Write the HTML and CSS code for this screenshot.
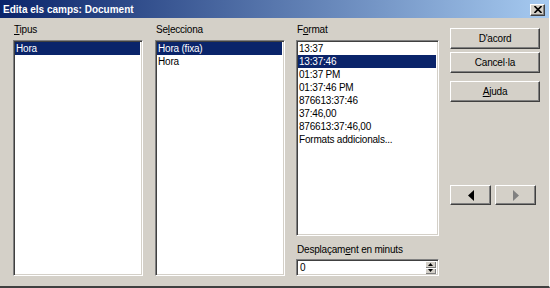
FILE: index.html
```html
<!DOCTYPE html>
<html>
<head>
<title>Edita els camps: Document</title>
<link rel="stylesheet" href="styles.css">
</head>
<body>
<div class="dialog">
  <div class="titlebar">
    <span class="title">Edita els camps: Document</span>
    <span class="close"><svg width="8" height="7" viewBox="0 0 8 7"><path d="M0.5 0 L7.5 7 M7.5 0 L0.5 7" stroke="#000" stroke-width="1.6"/></svg></span>
  </div>
  <div class="content">
    <div class="col col-tipus">
      <div class="label"><u>T</u>ipus</div>
      <div class="list tall">
        <div class="item sel">Hora</div>
      </div>
    </div>
    <div class="col col-sel">
      <div class="label">Se<u>l</u>ecciona</div>
      <div class="list tall">
        <div class="item sel">Hora (fixa)</div>
        <div class="item">Hora</div>
      </div>
    </div>
    <div class="col col-format">
      <div class="label">F<u>o</u>rmat</div>
      <div class="list short">
        <div class="item">13:37</div>
        <div class="item sel">13:37:46</div>
        <div class="item">01:37 PM</div>
        <div class="item">01:37:46 PM</div>
        <div class="item">876613:37:46</div>
        <div class="item">37:46,00</div>
        <div class="item">876613:37:46,00</div>
        <div class="item">Formats addicionals...</div>
      </div>
      <div class="label offset">Desplaçam<u>e</u>nt en minuts</div>
      <div class="spin">
        <span class="spin-value">0</span>
        <span class="spin-btns">
          <span class="spin-btn"><svg width="5" height="3" viewBox="0 0 5 3"><path d="M2.5 0 L5 3 L0 3 Z" fill="#000"/></svg></span>
          <span class="spin-btn"><svg width="5" height="3" viewBox="0 0 5 3"><path d="M0 0 L5 0 L2.5 3 Z" fill="#000"/></svg></span>
        </span>
      </div>
    </div>
    <div class="buttons">
      <div class="btn">D'acord</div>
      <div class="btn">Cancel·la</div>
      <div class="btn help"><u>A</u>juda</div>
      <div class="arrows">
        <div class="btn arrow"><svg width="6" height="11" viewBox="0 0 6 11"><path d="M6 0 L6 11 L0 5.5 Z" fill="#000"/></svg></div>
        <div class="btn arrow"><svg width="6" height="11" viewBox="0 0 6 11"><path d="M0 0 L6 5.5 L0 11 Z" fill="#808080"/></svg></div>
      </div>
    </div>
  </div>
</div>
</body>
</html>
```
FILE: styles.css
```css
/* Classic grey dialog */

body
{ margin: 0;
background: #d4d0c8;
font-family: "Liberation Sans", Arial, sans-serif;
font-size: 10px;
letter-spacing: -0.2px;
color: #000;
}

div.dialog
{ width: 550px;
height: 288px;
box-sizing: border-box;
border-bottom: 2px solid #404040;
border-right: 1px solid #ffffff;
display: flex;
flex-direction: column;
overflow: hidden;
}

div.titlebar
{ height: 18px;
display: flex;
align-items: center;
justify-content: space-between;
padding: 0 4px 0 3px;
background: linear-gradient(to right, #0a246a, #a6caf0);
color: #fff;
}

span.title
{ font-weight: bold;
font-size: 10px;
letter-spacing: 0;
}

span.close
{ width: 15px;
height: 12px;
box-sizing: border-box;
display: flex;
align-items: center;
justify-content: center;
background: #d4d0c8;
border: 1px solid;
border-color: #fff #404040 #404040 #fff;
box-shadow: inset -1px -1px 0 #808080;
margin-top: 1px;
}

div.content
{ display: flex;
padding: 4px 0 0 13px;
}

div.col
{ display: flex;
flex-direction: column;
}

div.col-tipus { width: 130px; margin-right: 12px; }
div.col-sel { width: 130px; margin-right: 11px; }
div.col-format { width: 143px; margin-right: 11px; }

div.label
{ height: 18px;
line-height: 16px;
padding-left: 1px;
}

div.label.offset
{ height: 17px;
padding-top: 6px;
line-height: 15px;
}

div.list
{ background: #fff;
box-sizing: border-box;
border: 1px solid;
border-color: #808080 #fff #fff #808080;
box-shadow: inset 1px 1px 0 #404040, inset -1px -1px 0 #d4d0c8;
padding: 1px 2px 1px 1px;
}

div.list.tall { height: 236px; }
div.list.short { height: 196px; }

div.item
{ height: 13px;
line-height: 13px;
white-space: nowrap;
padding-left: 1px;
}

div.item.sel
{ background: #0a246a;
color: #fff;
}

div.spin
{ height: 17px;
box-sizing: border-box;
display: flex;
justify-content: space-between;
background: #fff;
border: 1px solid;
border-color: #808080 #fff #fff #808080;
box-shadow: inset 1px 1px 0 #404040, inset -1px -1px 0 #d4d0c8;
padding: 1px 2px 1px 3px;
}

span.spin-value
{ line-height: 14px;
}

span.spin-btns
{ display: flex;
flex-direction: column;
width: 11px;
}

span.spin-btn
{ flex: 1;
display: flex;
align-items: center;
justify-content: center;
background: #d4d0c8;
box-shadow: inset 1px 1px 0 #fff, inset -1px -1px 0 #808080;
}

div.buttons
{ width: 90px;
padding-top: 6px;
display: flex;
flex-direction: column;
}

div.btn
{ height: 21px;
box-sizing: border-box;
display: flex;
align-items: center;
justify-content: center;
background: #d4d0c8;
border: 1px solid;
border-color: #fff #404040 #404040 #fff;
box-shadow: inset -1px -1px 0 #808080;
margin-bottom: 3px;
}

div.btn.help
{ margin-top: 5px;
}

div.arrows
{ display: flex;
gap: 4px;
margin-top: 80px;
}

div.btn.arrow
{ width: 41px;
height: 20px;
}
```
